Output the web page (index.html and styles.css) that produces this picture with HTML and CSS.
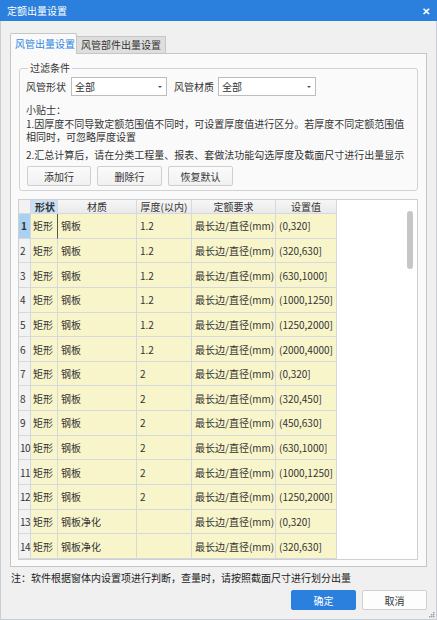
FILE: index.html
```html
<!DOCTYPE html>
<html lang="zh-CN">
<head>
<meta charset="utf-8">
<title>定额出量设置</title>
<link rel="stylesheet" href="styles.css">
</head>
<body>
<div class="dialog">
  <div class="titlebar">
    <span class="title">定额出量设置</span>
    <span class="close">&#x2715;</span>
  </div>
  <div class="content">
    <div class="tabs">
      <div class="tab active">风管出量设置</div>
      <div class="tab">风管部件出量设置</div>
    </div>
    <div class="panel">
      <fieldset class="filter">
        <legend>过滤条件</legend>
        <div class="filter-row">
          <span class="lbl">风管形状</span>
          <div class="select s1"><span>全部</span><i class="arrow"></i></div>
          <span class="lbl lbl2">风管材质</span>
          <div class="select s2"><span>全部</span><i class="arrow"></i></div>
        </div>
        <div class="tips">
          <p>小贴士：</p>
          <p>1.因厚度不同导致定额范围值不同时，可设置厚度值进行区分。若厚度不同定额范围值相同时，可忽略厚度设置</p>
          <p class="tip2">2.汇总计算后，请在分类工程量、报表、套做法功能勾选厚度及截面尺寸进行出量显示</p>
        </div>
        <div class="btn-row">
          <button class="btn">添加行</button>
          <button class="btn">删除行</button>
          <button class="btn">恢复默认</button>
        </div>
      </fieldset>
      <div class="grid-wrap">
        <div class="grid">
          <div class="row head">
            <div class="c num"></div>
            <div class="c sel">形状</div>
            <div class="c">材质</div>
            <div class="c">厚度(以内)</div>
            <div class="c">定额要求</div>
            <div class="c">设置值</div>
          </div>
          <div class="row first"><div class="c num">1</div><div class="c cur">矩形</div><div class="c">钢板</div><div class="c">1.2</div><div class="c">最长边/直径(mm)</div><div class="c">(0,320]</div></div>
          <div class="row"><div class="c num">2</div><div class="c">矩形</div><div class="c">钢板</div><div class="c">1.2</div><div class="c">最长边/直径(mm)</div><div class="c">(320,630]</div></div>
          <div class="row"><div class="c num">3</div><div class="c">矩形</div><div class="c">钢板</div><div class="c">1.2</div><div class="c">最长边/直径(mm)</div><div class="c">(630,1000]</div></div>
          <div class="row"><div class="c num">4</div><div class="c">矩形</div><div class="c">钢板</div><div class="c">1.2</div><div class="c">最长边/直径(mm)</div><div class="c">(1000,1250]</div></div>
          <div class="row"><div class="c num">5</div><div class="c">矩形</div><div class="c">钢板</div><div class="c">1.2</div><div class="c">最长边/直径(mm)</div><div class="c">(1250,2000]</div></div>
          <div class="row"><div class="c num">6</div><div class="c">矩形</div><div class="c">钢板</div><div class="c">1.2</div><div class="c">最长边/直径(mm)</div><div class="c">(2000,4000]</div></div>
          <div class="row"><div class="c num">7</div><div class="c">矩形</div><div class="c">钢板</div><div class="c">2</div><div class="c">最长边/直径(mm)</div><div class="c">(0,320]</div></div>
          <div class="row"><div class="c num">8</div><div class="c">矩形</div><div class="c">钢板</div><div class="c">2</div><div class="c">最长边/直径(mm)</div><div class="c">(320,450]</div></div>
          <div class="row"><div class="c num">9</div><div class="c">矩形</div><div class="c">钢板</div><div class="c">2</div><div class="c">最长边/直径(mm)</div><div class="c">(450,630]</div></div>
          <div class="row"><div class="c num">10</div><div class="c">矩形</div><div class="c">钢板</div><div class="c">2</div><div class="c">最长边/直径(mm)</div><div class="c">(630,1000]</div></div>
          <div class="row"><div class="c num">11</div><div class="c">矩形</div><div class="c">钢板</div><div class="c">2</div><div class="c">最长边/直径(mm)</div><div class="c">(1000,1250]</div></div>
          <div class="row"><div class="c num">12</div><div class="c">矩形</div><div class="c">钢板</div><div class="c">2</div><div class="c">最长边/直径(mm)</div><div class="c">(1250,2000]</div></div>
          <div class="row"><div class="c num">13</div><div class="c">矩形</div><div class="c">钢板净化</div><div class="c"></div><div class="c">最长边/直径(mm)</div><div class="c">(0,320]</div></div>
          <div class="row"><div class="c num">14</div><div class="c">矩形</div><div class="c">钢板净化</div><div class="c"></div><div class="c">最长边/直径(mm)</div><div class="c">(320,630]</div></div>
        </div>
        <div class="scrollbar"><div class="thumb"></div></div>
      </div>
    </div>
    <div class="note">注：软件根据窗体内设置项进行判断，查量时，请按照截面尺寸进行划分出量</div>
    <div class="footer">
      <button class="btn primary">确定</button>
      <button class="btn cancel">取消</button>
    </div>
  </div>
  <svg class="grip" width="7" height="7" viewBox="0 0 7 7">
    <rect x="5" y="1" width="1.4" height="1.4" fill="#9a9a9a"/>
    <rect x="3" y="3" width="1.4" height="1.4" fill="#9a9a9a"/>
    <rect x="5" y="3" width="1.4" height="1.4" fill="#9a9a9a"/>
    <rect x="1" y="5" width="1.4" height="1.4" fill="#9a9a9a"/>
    <rect x="3" y="5" width="1.4" height="1.4" fill="#9a9a9a"/>
    <rect x="5" y="5" width="1.4" height="1.4" fill="#9a9a9a"/>
  </svg>
</div>
</body>
</html>
```

FILE: styles.css
```css
* { box-sizing: border-box; }
html, body { margin: 0; padding: 0; }
body {
  font-family: "Noto Sans CJK SC", "Noto Sans", sans-serif;
  font-size: 10px;
  color: #333;
}
.dialog {
  position: relative;
  width: 437px;
  height: 620px;
  background: #f0f0f0;
  border-left: 1px solid #c9ced6;
  border-right: 1px solid #c9ced6;
  border-bottom: 1px solid #c9ced6;
  display: flex;
  flex-direction: column;
}
.titlebar {
  height: 21px;
  margin: 0 -1px;
  background: #2b7fdd;
  color: #fff;
  display: flex;
  align-items: center;
  justify-content: space-between;
  padding: 0 7px 0 7px;
  flex-shrink: 0;
}
.title { font-size: 10px; line-height: 12px; }
.close { font-size: 10px; font-weight: bold; line-height: 12px; }
.content {
  flex: 1;
  display: flex;
  flex-direction: column;
  padding: 12px 9px 0 9px;
}
.tabs {
  display: flex;
  align-items: flex-end;
  height: 20px;
}
.tab {
  height: 17px;
  padding: 0 3px 0 4px;
  border: 1px solid #c6c6c6;
  border-bottom: none;
  background: #dedede;
  color: #333;
  line-height: 15px;
  white-space: nowrap;
}
.tab.active {
  width: 67px;
  background: #fafafa;
  color: #2f86e0;
  line-height: 20px;
  border-radius: 2px 2px 0 0;
  position: relative;
  z-index: 1;
  margin-bottom: -1px;
  height: 21px;
}
.tab + .tab { width: 89px; border-left: none; }
.panel {
  height: 514px;
  border: 1px solid #c6c6c6;
  background: #fafafa;
  padding: 8px 8px 8px 8px;
  display: flex;
  flex-direction: column;
}
.filter {
  margin: 0;
  padding: 3px 6px 4px 6px;
  border: 1px solid #d2d2d2;
  border-radius: 3px;
  min-width: 0;
}
.filter legend {
  padding: 0 2px;
  margin-left: 2px;
  line-height: 12px;
  color: #333;
}
.filter-row {
  display: flex;
  align-items: center;
  height: 19px;
}
.lbl { white-space: nowrap; margin-right: 5px; }
.lbl2 { margin-left: 7px; margin-right: 4px; }
.select {
  height: 19px;
  border: 1px solid #bdbdbd;
  background: #fff;
  display: flex;
  align-items: center;
  justify-content: space-between;
  padding: 0 4px 0 3px;
}
.s1 { width: 96px; }
.s2 { width: 98px; }
.arrow {
  width: 0;
  height: 0;
  border-left: 2px solid transparent;
  border-right: 2px solid transparent;
  border-top: 2px solid #555;
}
.tips { margin-top: 7px; }
.tips p { margin: 0; line-height: 13.5px; }
.tips .tip2 { margin-top: 4px; }
.btn-row {
  display: flex;
  gap: 6px;
  margin-top: 5px;
  padding-left: 1px;
}
.btn {
  font-family: inherit;
  font-size: 10px;
  color: #333;
  height: 20px;
  width: 65px;
  padding: 0;
  border: 1px solid #cfcfcf;
  border-radius: 2px;
  background: linear-gradient(#fbfbfb, #f1f1f1);
}
.btn-row .btn:first-child { width: 64px; }
.grid-wrap {
  margin-top: 8px;
  flex: 1;
  border: 1px solid #cfcfcf;
  background: #fff;
  position: relative;
  margin-left: -1px;
}
.row {
  display: grid;
  grid-template-columns: 12px 27px 79px 55px 84px 61px;
  width: 318px;
  height: 24.65px;
}
.row.head { height: 14px; }
.c {
  border-right: 1px solid #d5d8dc;
  border-bottom: 1px solid #d5d8dc;
  background: #f8f5cb;
  color: #333;
  padding-left: 3px;
  display: flex;
  align-items: center;
  white-space: nowrap;
  overflow: hidden;
}
.head .c {
  background: linear-gradient(#f6f6f6, #eaeaea);
  justify-content: center;
  padding-left: 0;
  line-height: 13px;
}
.head .c.sel { background: #c9e0f5; font-weight: bold; }
.c.num {
  background: #f2f2f2;
  padding-left: 1px;
  letter-spacing: -0.6px;
  overflow: visible;
}
.first .c.num { background: #a9d1f2; font-weight: bold; padding-left: 2px; }
.c:nth-child(2) { padding-left: 2px; }
.c.cur { border-right: 1px solid #555; }
.scrollbar {
  position: absolute;
  right: 4px;
  top: 11px;
  width: 6px;
  height: 58px;
}
.thumb {
  width: 6px;
  height: 58px;
  border-radius: 3px;
  background: #c6c6c6;
}
.note {
  margin-top: 4px;
  line-height: 13px;
  padding-left: 1px;
  color: #222;
}
.footer {
  display: flex;
  justify-content: flex-end;
  gap: 6px;
  margin-top: 6px;
}
.footer .btn { width: 65px; height: 20px; }
.btn.primary {
  background: #2b7fdd;
  border-color: #2b7fdd;
  color: #fff;
}
.btn.cancel {
  background: #fdfdfd;
  border-color: #cfcfcf;
}
.grip { position: absolute; right: 1px; bottom: 1px; }
```
